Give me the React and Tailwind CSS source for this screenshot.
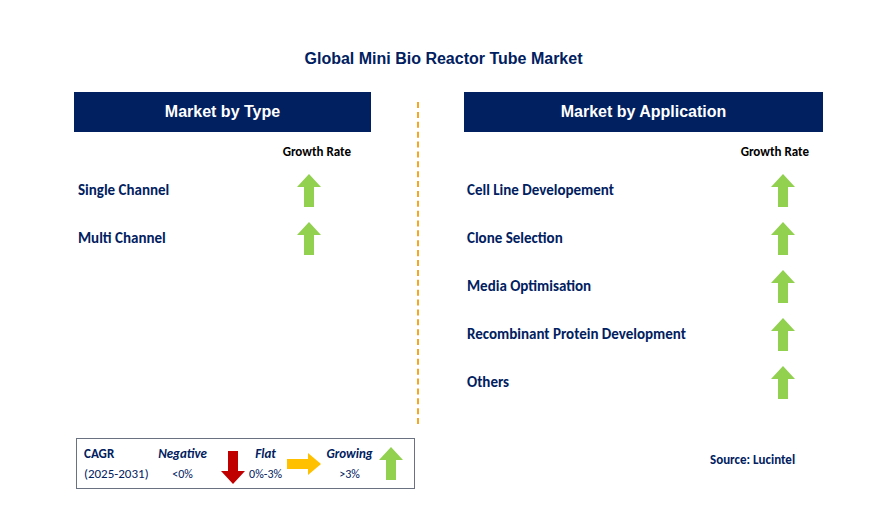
const Up = () => (
  <svg width="24" height="33" viewBox="0 0 24 33"><polygon points="12,0 24,13 17,13 17,33 7,33 7,13 0,13" fill="#92d050" /></svg>
);
const Down = () => (
  <svg width="24" height="33" viewBox="0 0 24 33"><polygon points="12,33 24,20 17,20 17,0 7,0 7,20 0,20" fill="#c00000" /></svg>
);
const Right = () => (
  <svg width="34" height="22" viewBox="0 0 34 22"><polygon points="34,11 21,0 21,6 0,6 0,16 21,16 21,22" fill="#ffc000" /></svg>
);

const Row = ({ label }) => (
  <div className="flex items-center h-[48px]">
    <span className="flex-1 text-[15px] font-bold text-[#002060]">{label}</span>
    <Up />
  </div>
);

export default function App() {
  const types = ['Single Channel', 'Multi Channel'];
  const apps = ['Cell Line Developement', 'Clone Selection', 'Media Optimisation', 'Recombinant Protein Development', 'Others'];
  return (
    <div className="w-[887px] h-[521px] bg-white relative" style={{ fontFamily: 'Calibri, Carlito, "Liberation Sans", sans-serif' }}>
      <div className="pt-[47px] text-center text-[16px] font-bold text-[#002060] h-[92px]" style={{ fontFamily: '"Liberation Sans", Arial, sans-serif' }}>
        Global Mini Bio Reactor Tube Market
      </div>
      <div className="flex">
        <div className="ml-[74px] w-[297px]">
          <div className="h-[40px] bg-[#002060] text-white font-bold text-[16px] flex items-center justify-center" style={{ fontFamily: '"Liberation Sans", sans-serif' }}>Market by Type</div>
          <div className="text-right pr-[20px] mt-[10px] text-[13px] font-bold text-black h-[24px]">Growth Rate</div>
          <div className="pl-[4px] pr-[50px]">
            {types.map(t => <Row key={t} label={t} />)}
          </div>
        </div>
        <div className="w-[93px] flex justify-center">
          <div className="mt-[10px] h-[322px] border-l-2 border-dashed border-[#f5a623]" />
        </div>
        <div className="w-[359px]">
          <div className="h-[40px] bg-[#002060] text-white font-bold text-[16px] flex items-center justify-center" style={{ fontFamily: '"Liberation Sans", sans-serif' }}>Market by Application</div>
          <div className="text-right pr-[14px] mt-[10px] text-[13px] font-bold text-black h-[24px]">Growth Rate</div>
          <div className="pl-[3px] pr-[28px]">
            {apps.map(t => <Row key={t} label={t} />)}
          </div>
        </div>
      </div>
      <div className="absolute left-[76px] top-[438px] w-[339px] h-[51px] border border-gray-500 flex items-center px-[7px] text-[#002060] text-[13px]">
        <div className="font-bold leading-[20px]">CAGR<br /><span className="font-normal">(2025-2031)</span></div>
        <div className="ml-[4px] text-center leading-[20px] w-[60px]"><div className="font-bold italic">Negative</div><div className="text-[12px]">&lt;0%</div></div>
        <div className="ml-[8px] mt-[8px]"><Down /></div>
        <div className="text-center leading-[20px] w-[42px]"><div className="font-bold italic">Flat</div><div className="text-[12px]">0%-3%</div></div>
        <Right />
        <div className="text-center leading-[20px] w-[58px]"><div className="font-bold italic">Growing</div><div className="text-[12px]">&gt;3%</div></div>
        <Up />
      </div>
      <div className="absolute left-[710px] top-[450px] text-[13px] font-bold text-[#002060]">Source: Lucintel</div>
    </div>
  );
}
